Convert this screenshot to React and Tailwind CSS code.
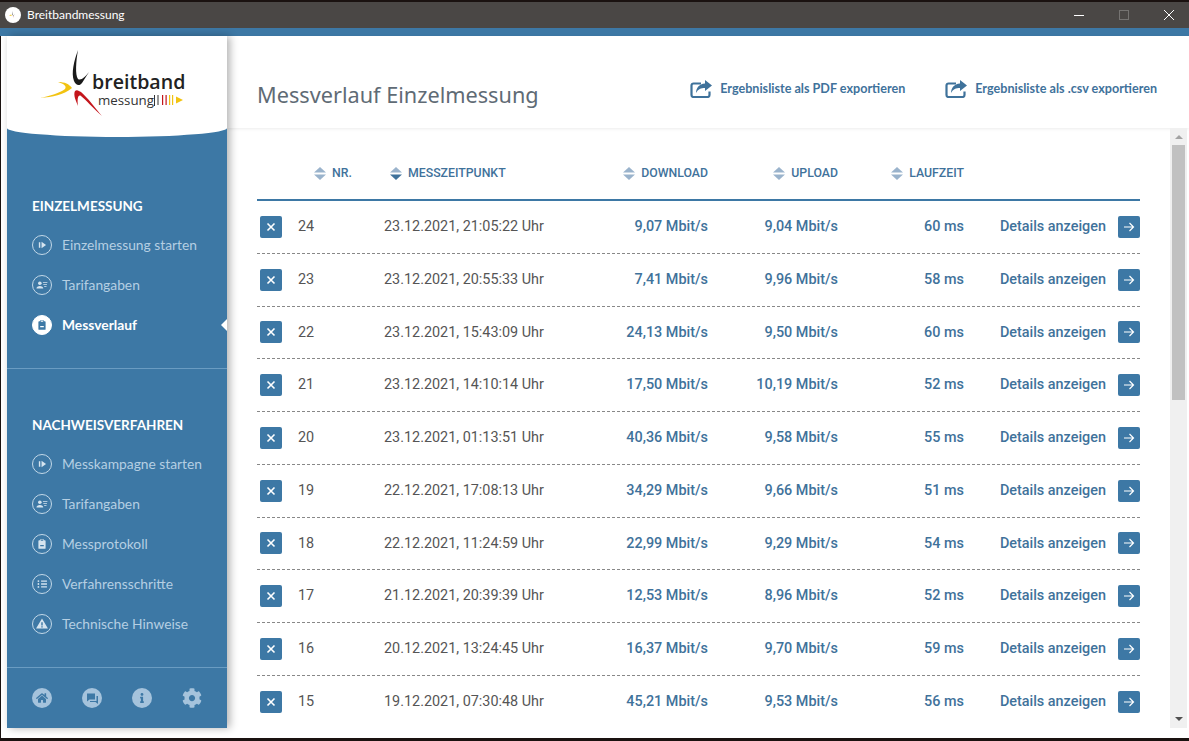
import { FaCog, FaHome, FaInfo } from "react-icons/fa";

const ROWS = [
  ["24", "23.12.2021, 21:05:22 Uhr", "9,07 Mbit/s", "9,04 Mbit/s", "60 ms"],
  ["23", "23.12.2021, 20:55:33 Uhr", "7,41 Mbit/s", "9,96 Mbit/s", "58 ms"],
  ["22", "23.12.2021, 15:43:09 Uhr", "24,13 Mbit/s", "9,50 Mbit/s", "60 ms"],
  ["21", "23.12.2021, 14:10:14 Uhr", "17,50 Mbit/s", "10,19 Mbit/s", "52 ms"],
  ["20", "23.12.2021, 01:13:51 Uhr", "40,36 Mbit/s", "9,58 Mbit/s", "55 ms"],
  ["19", "22.12.2021, 17:08:13 Uhr", "34,29 Mbit/s", "9,66 Mbit/s", "51 ms"],
  ["18", "22.12.2021, 11:24:59 Uhr", "22,99 Mbit/s", "9,29 Mbit/s", "54 ms"],
  ["17", "21.12.2021, 20:39:39 Uhr", "12,53 Mbit/s", "8,96 Mbit/s", "52 ms"],
  ["16", "20.12.2021, 13:24:45 Uhr", "16,37 Mbit/s", "9,70 Mbit/s", "59 ms"],
  ["15", "19.12.2021, 07:30:48 Uhr", "45,21 Mbit/s", "9,53 Mbit/s", "56 ms"],
];

const GRID = "grid grid-cols-[41px_86px_216px_108px_130px_126px_176px]";

// glyphs drawn inside the 20x20 round nav icons
function Glyph({ name }) {
  if (name === "play")
    return <path d="M6.5 7h1.6v6H6.5zM9.5 6.5l5 3.5-5 3.5z" fill="currentColor" />;
  if (name === "person")
    return (
      <g fill="currentColor">
        <circle cx="7.6" cy="8" r="2" />
        <path d="M3.8 13.8c0-1.8 1.6-2.8 3.8-2.8s3.8 1 3.8 2.8z" />
        <path d="M11 6.6h5v1h-5zM11.5 8.8h4v1h-4zM12.4 11h2.6v1h-2.6z" />
      </g>
    );
  if (name === "clipboard")
    return (
      <path
        fillRule="evenodd"
        d="M8 4.6h4v1.2h1.2c.5 0 .8.3.8.8v8c0 .5-.3.8-.8.8H6.800c-.5 0-.8-.3-.8-.8v-8c0-.5.3-.8.8-.8H8zM8 11.200v1.400h4v-1.400zM8.700 5.400v1h2.600v-1z"
        fill="currentColor"
      />
    );
  if (name === "list")
    return (
      <g fill="currentColor">
        <path d="M9 6h6.500v1.500H9zM9 9.250h6.500v1.500H9zM9 12.500h6.500V14H9z" />
        <circle cx="6" cy="6.800" r="1" />
        <circle cx="6" cy="10" r="1" />
        <circle cx="6" cy="13.200" r="1" />
      </g>
    );
  return (
    <path
      fillRule="evenodd"
      d="M10 4l6.600 11H3.400zM9.200 8v3.800h1.600V8zM9.200 12.500v1.500h1.600v-1.500z"
      fill="currentColor"
    />
  );
}

function NavIcon({ name, active }) {
  return (
    <span
      className={`flex h-5 w-5 shrink-0 items-center justify-center rounded-full border ${
        active ? "border-white bg-white text-[#3d78a5]" : "border-[#c3d8e8] text-[#d5e4ef]"
      }`}
    >
      <svg viewBox="0 0 20 20" className="h-5 w-5">
        <Glyph name={name} />
      </svg>
    </span>
  );
}

function NavItem({ icon, label, active }) {
  return (
    <div className="relative flex h-10 items-center gap-2.5 pl-[25px]">
      <NavIcon name={icon} active={active} />
      <span className={active ? "text-[13.800px] font-bold text-white" : "text-[13.800px] text-[#b5cfe3]"}>
        {label}
      </span>
      {active && (
        <span className="absolute right-0 top-1/2 h-0 w-0 -translate-y-1/2 border-y-[6px] border-r-[6px] border-y-transparent border-r-white" />
      )}
    </div>
  );
}

function Logo() {
  return (
    <div className="relative mr-[9px] h-[75px] w-[155px] font-['Open_Sans',sans-serif]">
      <svg viewBox="0 0 155 75" className="absolute inset-0 h-[75px] w-[155px]">
        <path d="M43 5C39 16 36 28 39 36c2 5 6 5 8 2l7-11c-4 5-8 9-11 7-3-4-2-18 0-29z" fill="#1a1a1a" />
        <path d="M5 53c13-1 23-3 32-10-3-4-7-6-14-6 6 2 9 4 7 7-5 4-15 7-25 9z" fill="#f2c311" />
        <path d="M40 46c2-2 4 0 6 1 7 6 14 16 21 24-9-8-17-17-21-20-3-2-4 3-3 10-2-5-5-11-3-15z" fill="#c4161c" />
        <path d="M119 50h1v11h-1zM122.500 50h1v10h-1z" fill="#333" />
        <path d="M127 50h1.200v10H127zM130.500 50h1.200v10h-1.200z" fill="#c4161c" />
        <path d="M134 50h1.200v10H134zM137 50h1.200v10H137z" fill="#f2c311" />
        <path d="M141 51.500l7 3.500-7 3.500z" fill="#f2c311" />
      </svg>
      <span className="absolute left-[57px] top-[26px] text-[19.600px] font-semibold leading-[22px] text-[#222]">
        breitband
      </span>
      <span className="absolute left-[63px] top-[48px] text-[13.300px] leading-[14px] text-[#333]">
        messung
      </span>
    </div>
  );
}

function ExportLink({ label }) {
  return (
    <div className="flex items-center gap-2 text-[#3f729b]">
      <svg viewBox="0 0 22 18" className="h-[18px] w-[22px]">
        <path d="M11 3.500H3.500a2 2 0 0 0-2 2v9.500a2 2 0 0 0 2 2h14a2 2 0 0 0 2-2v-3.500" fill="none" stroke="currentColor" strokeWidth="2.200" />
        <path d="M15 0l7 5.500-7 5.500V8c-4 0-7 1-9 5 0-5 3-9 9-9.500z" fill="currentColor" />
      </svg>
      <span className="font-['Lato',sans-serif] text-[12.600px] font-bold">{label}</span>
    </div>
  );
}

function SortIcon({ down }) {
  return (
    <svg viewBox="0 0 12 13" className="h-[13px] w-3 shrink-0">
      <path d="M6 0l6 5.500H0z" fill="#9ab3cc" />
      <path d="M0 7.500h12L6 13z" fill={down ? "#3f729b" : "#9ab3cc"} />
    </svg>
  );
}

function HeaderCell({ label, className, down }) {
  return (
    <div className={`flex items-center gap-1.5 ${className}`}>
      <SortIcon down={down} />
      <span>{label}</span>
    </div>
  );
}

function SquareButton({ children }) {
  return (
    <span className="flex h-[22px] w-[22px] items-center justify-center rounded-[2px] bg-[#3d78a5] text-white">
      {children}
    </span>
  );
}

function Row({ row }) {
  return (
    <div className={`${GRID} h-[52.780px] items-center border-b border-dashed border-[#888] text-[14.400px]`}>
      <div className="pl-[3px]">
        <SquareButton>
          <svg viewBox="0 0 10 10" className="h-2.5 w-2.5">
            <path d="M1.500 1.500l7 7M8.500 1.500l-7 7" stroke="currentColor" strokeWidth="1.600" />
          </svg>
        </SquareButton>
      </div>
      <div className="text-[#555]">{row[0]}</div>
      <div className="text-[#555]">{row[1]}</div>
      <div className="text-right font-medium text-[#3f729b]">{row[2]}</div>
      <div className="text-right font-medium text-[#3f729b]">{row[3]}</div>
      <div className="text-right font-medium text-[#3f729b]">{row[4]}</div>
      <div className="flex items-center justify-end gap-3 font-medium text-[#3f729b]">
        <span>Details anzeigen</span>
        <SquareButton>
          <svg viewBox="0 0 12 12" className="h-3 w-3">
            <path d="M1 6h9.500M6.500 2l4 4-4 4" fill="none" stroke="currentColor" strokeWidth="1.200" />
          </svg>
        </SquareButton>
      </div>
    </div>
  );
}

function Sidebar() {
  return (
    <aside className="z-10 flex w-[220px] shrink-0 flex-col bg-[#3d78a5] font-['Lato',sans-serif] shadow-[3px_0_8px_rgba(0,0,0,0.3)]">
      <div className="flex h-[101px] items-start justify-center rounded-b-[50%_9px] bg-white pt-[9px]">
        <Logo />
      </div>

      <div className="border-b border-[#6a9cc2] pb-[23px] pt-[59px]">
        <h3 className="pl-[25px] text-[13.500px] font-bold leading-5 text-white">EINZELMESSUNG</h3>
        <div className="mt-[9px]">
          <NavItem icon="play" label="Einzelmessung starten" />
          <NavItem icon="person" label="Tarifangaben" />
          <NavItem icon="clipboard" label="Messverlauf" active />
        </div>
      </div>

      <div className="border-b border-[#6a9cc2] pb-[23px] pt-[46px]">
        <h3 className="pl-[25px] text-[13.500px] font-bold leading-5 text-white">NACHWEISVERFAHREN</h3>
        <div className="mt-[9px]">
          <NavItem icon="play" label="Messkampagne starten" />
          <NavItem icon="person" label="Tarifangaben" />
          <NavItem icon="clipboard" label="Messprotokoll" />
          <NavItem icon="list" label="Verfahrensschritte" />
          <NavItem icon="warning" label="Technische Hinweise" />
        </div>
      </div>

      <div className="flex flex-1 items-center gap-[30px] pl-[25px]">
        <span className="flex h-5 w-5 items-center justify-center rounded-full bg-[#a5c3dc] text-[#3d78a5]">
          <FaHome className="h-3 w-3" />
        </span>
        <span className="flex h-5 w-5 items-center justify-center rounded-full bg-[#a5c3dc] text-[#3d78a5]">
          <svg viewBox="0 0 20 20" className="h-5 w-5">
            <path d="M5 5.500h8v6H7.500L5 13.500z" fill="currentColor" />
            <path d="M14.500 8H16v8l-2.500-2H8v-1h6.500z" fill="currentColor" />
          </svg>
        </span>
        <span className="flex h-5 w-5 items-center justify-center rounded-full bg-[#a5c3dc] text-[#3d78a5]">
          <FaInfo className="h-2.5 w-2.5" />
        </span>
        <FaCog className="h-5 w-5 text-[#a5c3dc]" />
      </div>
    </aside>
  );
}

export default function App() {
  return (
    <div className="flex h-[741px] w-[1189px] flex-col overflow-hidden bg-[#1a1210] font-['Roboto',sans-serif]">
      <div className="mt-[2px] flex h-[26px] shrink-0 items-center bg-[#4a4745] pl-[5px] text-white">
        <span className="flex h-4 w-4 items-center justify-center rounded-full bg-white">
          <svg viewBox="0 0 10 10" className="h-2.5 w-2.5">
            <path d="M5 1L4.500 5l1 .5 1.500-2-2 3z" fill="#222" />
            <path d="M1 6l3-.500L3 4.500z" fill="#f2c311" />
            <path d="M4.500 5.500L7 9 5 6z" fill="#c4161c" />
          </svg>
        </span>
        <span className="ml-[6px] font-['Lato',sans-serif] text-[12px]">Breitbandmessung</span>
        <div className="ml-auto mr-[15px] flex items-center gap-[35px]">
          <span className="h-px w-2.5 bg-white" />
          <span className="h-2.5 w-2.5 border border-[#757371]" />
          <svg viewBox="0 0 10 10" className="h-2.5 w-2.5">
            <path d="M0 0l10 10M10 0L0 10" stroke="#fff" strokeWidth="1" />
          </svg>
        </div>
      </div>
      <div className="h-2 shrink-0 bg-[#3d78a5]" />

      <div className="ml-[1px] flex h-[702px] bg-white pb-[10px] pl-[6px]">
        <Sidebar />
        <main className="flex min-w-0 flex-1 flex-col">
          <header className="flex h-[92px] shrink-0 items-start justify-between pl-[30px] pr-[32px] shadow-[0_1px_3px_rgba(0,0,0,0.08)]">
            <h1 className="mt-[43px] font-['Noto_Sans',sans-serif] text-[21.700px] leading-8 text-[#5f6b75]">
              Messverlauf Einzelmessung
            </h1>
            <div className="mt-[44px] flex gap-[40px]">
              <ExportLink label="Ergebnisliste als PDF exportieren" />
              <ExportLink label="Ergebnisliste als .csv exportieren" />
            </div>
          </header>

          <div className="flex min-h-0 flex-1">
            <div className="min-w-0 flex-1 overflow-hidden pl-[30px] pr-[30px]">
              <div className={`${GRID} h-[73px] items-end border-b-2 border-[#3d78a5] pb-[16px] text-[12.300px] font-medium leading-5 text-[#3f729b]`}>
                <div />
                <HeaderCell label="NR." className="pl-4" />
                <HeaderCell label="MESSZEITPUNKT" className="pl-[6px]" down />
                <HeaderCell label="DOWNLOAD" className="justify-end" />
                <HeaderCell label="UPLOAD" className="justify-end" />
                <HeaderCell label="LAUFZEIT" className="justify-end" />
                <div />
              </div>
              {ROWS.map((row) => (
                <Row key={row[0]} row={row} />
              ))}
            </div>

            <div className="mr-[2px] flex w-[17px] shrink-0 flex-col items-center bg-[#f0f0f0]">
              <span className="mt-[7px] h-0 w-0 border-x-4 border-b-4 border-x-transparent border-b-[#a3a3a3]" />
              <span className="mt-[6px] h-[255px] w-[13px] bg-[#c1c1c1]" />
              <span className="mb-[7px] mt-auto h-0 w-0 border-x-4 border-t-4 border-x-transparent border-t-[#505050]" />
            </div>
          </div>
        </main>
      </div>
    </div>
  );
}
